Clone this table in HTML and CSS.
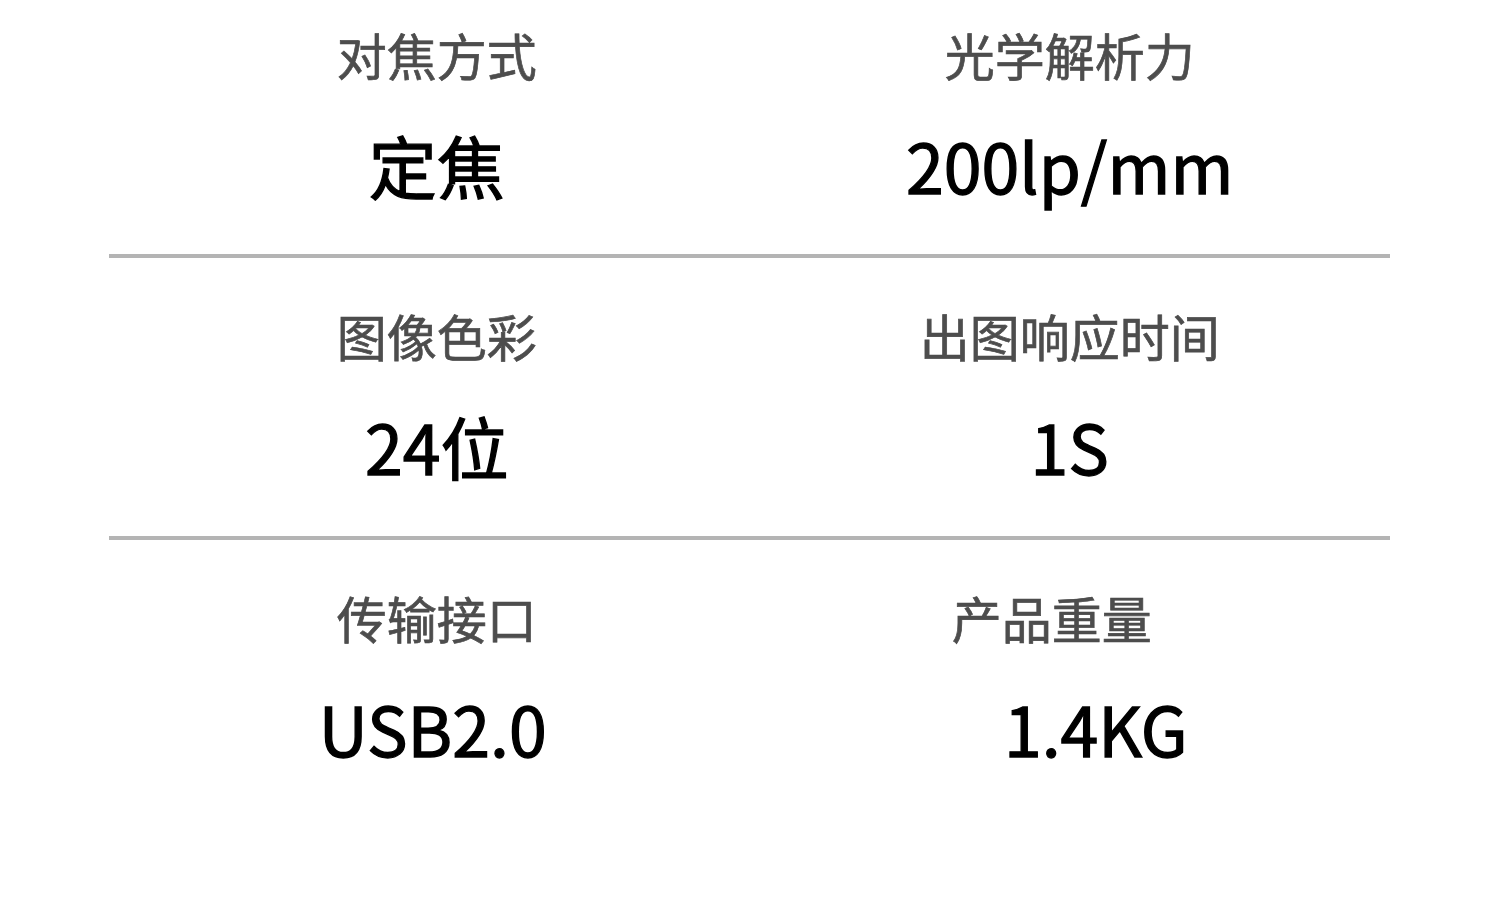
FILE: index.html
```html
<!DOCTYPE html>
<html lang="zh-CN">
<head>
  <meta charset="UTF-8" />
  <meta name="viewport" content="width=device-width, initial-scale=1.0" />
  <title>产品参数</title>
  <link rel="stylesheet" href="styles.css">
</head>
<body>
  <section class="specs">
    <div class="row">
      <div class="cell left">
        <div class="label">对焦方式</div>
        <div class="value">定焦</div>
      </div>
      <div class="cell right">
        <div class="label">光学解析力</div>
        <div class="value">200lp/mm</div>
      </div>
    </div>
    <div class="row">
      <div class="cell left">
        <div class="label">图像色彩</div>
        <div class="value">24位</div>
      </div>
      <div class="cell right">
        <div class="label">出图响应时间</div>
        <div class="value">1S</div>
      </div>
    </div>
    <div class="row last">
      <div class="cell left">
        <div class="label">传输接口</div>
        <div class="value usb">USB2.0</div>
      </div>
      <div class="cell right">
        <div class="label weight">产品重量</div>
        <div class="value kg">1.4KG</div>
      </div>
    </div>
  </section>
</body>
</html>
```

FILE: styles.css
```css
body {
  margin: 0;
  background: #fff;
  font-family: "Noto Sans CJK SC", "Noto Sans", sans-serif;
  height: 915px;
  overflow: hidden;
}
.specs {
  margin: 0 110px 0 109px;
}
.row {
  display: grid;
  grid-template-columns: 1fr 1fr;
  padding: 52px 0 50px;
  border-bottom: 4px solid #b4b4b4;
}
.row:first-child {
  padding-top: 29px;
  padding-bottom: 49px;
}
.row.last {
  border-bottom: none;
}
.cell {
  display: flex;
  flex-direction: column;
  align-items: center;
  gap: 46px;
}
.cell.left {
  padding-left: 15px;
}
.label {
  font-size: 50px;
  line-height: 50px;
  color: #4d4d4d;
  -webkit-text-stroke: 0.7px #4d4d4d;
}
.value {
  font-size: 68px;
  line-height: 80px;
  color: #000;
  -webkit-text-stroke: 1.3px #000;
}
.value.usb {
  padding-right: 8px;
}
.label.weight {
  padding-right: 36px;
}
.value.kg {
  padding-left: 52px;
}
```
